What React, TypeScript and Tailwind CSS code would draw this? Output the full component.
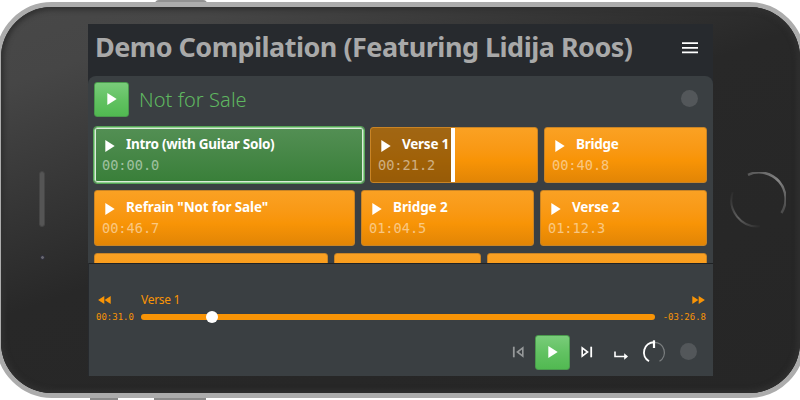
import React from "react";
import { clsx } from "clsx";

type Part = {
  title?: string;
  time?: string;
  width: string;
  tracking?: string;
  active?: boolean;
  progress?: number;
};

const rows: Part[][] = [
  [
    { title: "Intro (with Guitar Solo)", time: "00:00.0", width: "w-[270px]", tracking: "tracking-[-0.27px]", active: true },
    { title: "Verse 1", time: "00:21.2", width: "w-[168px]", tracking: "tracking-[-0.25px]", progress: 80 },
    { title: "Bridge", time: "00:40.8", width: "w-[163px]", tracking: "tracking-[-0.25px]" },
  ],
  [
    { title: 'Refrain "Not for Sale"', time: "00:46.7", width: "w-[261px]", tracking: "tracking-[-0.12px]" },
    { title: "Bridge 2", time: "01:04.5", width: "w-[173px]", tracking: "tracking-[-0.1px]" },
    { title: "Verse 2", time: "01:12.3", width: "w-[167px]", tracking: "tracking-[-0.15px]" },
  ],
  [{ width: "w-[234px]" }, { width: "w-[147px]" }, { width: "w-[220px]" }],
];

function PlayIcon({ className }: { className?: string }) {
  return (
    <svg viewBox="0 0 10 12" className={clsx("h-3 w-2.5 shrink-0 fill-white", className)}>
      <path d="M0.3 0L9.7 6L0.3 12Z" />
    </svg>
  );
}

function PlayButton() {
  return (
    <button className="flex size-[35px] shrink-0 items-center justify-center rounded-[3px] border border-[#4a9a4d] bg-linear-to-b from-[#79cc7a] via-[#62c262] to-[#51b951]">
      <PlayIcon className="mr-px mb-px ml-0.5" />
    </button>
  );
}

function PartTile({ part }: { part: Part }) {
  return (
    <button
      className={clsx(
        "relative flex h-14 shrink-0 flex-col overflow-hidden rounded-[3px] border pl-[7px] text-left",
        part.width,
        part.active
          ? "border-[#8fcf8f] bg-linear-to-b from-[#538f54] to-[#397f39] inset-shadow-[0_0_0_1px_#dcebdb] outline-1 outline-[#56a557]"
          : "border-[#c98425] bg-linear-to-b from-[#faa123] via-[#f89406] via-60% to-[#e28505]",
      )}
    >
      {part.progress && (
        <span
          className="absolute inset-y-0 left-0 bg-[#653f09]/60"
          style={{ width: part.progress }}
        />
      )}
      {part.progress && (
        <span className="absolute inset-y-0 w-1 bg-white" style={{ left: part.progress }} />
      )}
      {part.title && (
        <span className="relative mt-1.5 flex h-5 items-center pl-[3px]">
          <PlayIcon className="mt-[3px]" />
          <span className={clsx("ml-[11px] text-[13.5px] leading-5 font-bold whitespace-nowrap text-white", part.tracking)}>
            {part.title}
          </span>
        </span>
      )}
      {part.time && (
        <span className="relative mt-px h-5 font-['DejaVu_Sans_Mono',monospace] text-[13.6px] leading-5 text-white/50">
          {part.time}
        </span>
      )}
    </button>
  );
}

function SkipIcon({ flip, className }: { flip?: boolean; className?: string }) {
  return (
    <svg viewBox="0 0 12 12" className={clsx("size-3 shrink-0", flip && "-scale-x-100", className)}>
      <path d="M1.2 1.8V10.2L6.6 6Z" fill="none" stroke="currentColor" strokeWidth="1.6" />
      <path d="M10.2 0.7V11.3" stroke="currentColor" strokeWidth="1.8" />
    </svg>
  );
}

function DoubleArrow({ flip }: { flip?: boolean }) {
  return (
    <svg viewBox="0 0 13 8" className={clsx("h-2 w-[13px] fill-[#f89406]", flip && "-scale-x-100")}>
      <path d="M0.3 0L6.4 4L0.3 8ZM6.7 0L12.9 4L6.7 8Z" />
    </svg>
  );
}

function Player() {
  return (
    <footer className="ml-px flex h-[113px] w-[624px] flex-col border-t border-[#1f2224] bg-[#3a3f42]">
      <div className="mt-[30px] flex h-3 items-center pr-2 pl-[9px] text-[#f89406]">
        <DoubleArrow flip />
        <span className="ml-[30px] text-[12px] leading-3 tracking-[-0.3px]">Verse 1</span>
        <span className="ml-auto">
          <DoubleArrow />
        </span>
      </div>
      <div className="mt-[5px] flex h-3 items-center pr-[7px] pl-[7px] font-['DejaVu_Sans_Mono',monospace] text-[9px] leading-3 text-[#f89406]">
        <span className="w-[45px]">00:31.0</span>
        <div className="relative h-1.5 w-[514px] rounded-full bg-[#f89406]">
          <span className="absolute -top-[3px] left-[65px] size-3 rounded-full bg-white" />
        </div>
        <span className="ml-auto">-03:26.8</span>
      </div>
      <div className="mt-[12px] flex h-[35px] items-center pb-px pl-[423px]">
        <SkipIcon flip className="text-[#96999a]" />
        <div className="ml-[11px]">
          <PlayButton />
        </div>
        <SkipIcon className="ml-[11px] text-white" />
        <svg viewBox="0 0 15 9" className="mt-1.5 ml-[21px] h-[9px] w-[15px]" fill="none" stroke="#fff">
          <path d="M1 0.5V5.5H12.5" strokeWidth="1.6" />
          <path d="M10.2 2.3L14 5.5L10.2 8.7Z" fill="#fff" stroke="none" />
        </svg>
        <svg viewBox="0 0 24 24" className="ml-[13px] size-6" fill="none">
          <path d="M12.2 2.3A10.2 10.2 0 0 1 17.5 21.2" stroke="#7b7f81" strokeWidth="1.3" />
          <path d="M12.2 2.3A10.2 10.2 0 0 0 7 21.3" stroke="#fff" strokeWidth="1.9" />
          <path d="M12 0.3V8" stroke="#fff" strokeWidth="2.2" />
        </svg>
        <span className="mb-0.5 ml-[14px] size-[17px] rounded-full bg-[#53575a]" />
      </div>
    </footer>
  );
}

function Screen() {
  return (
    <div className="flex h-[352px] w-[625px] shrink-0 flex-col overflow-hidden bg-[#272a2e]">
      <header className="flex h-[52px] shrink-0 items-center justify-between pr-[15px] pl-[7px]">
        <h1 className="pb-1.5 text-[27px] font-bold whitespace-nowrap tracking-[-0.52px] text-[#a9a9a9]">
          Demo Compilation (Featuring Lidija Roos)
        </h1>
        <svg viewBox="0 0 16 12" className="mb-1 h-3 w-4" stroke="#fff" strokeWidth="1.8">
          <path d="M0 1.2H16M0 5.8H16M0 10.4H16" />
        </svg>
      </header>
      <main className="h-[187px] shrink-0 overflow-hidden rounded-t-lg bg-[#3a3f42] px-1.5 pt-1.5">
        <div className="flex h-[35px] items-center">
          <PlayButton />
          <h2 className="ml-[10px] text-[20px] font-light tracking-[0.08px] text-[#5fb760]">Not for Sale</h2>
          <span className="mr-[9px] mb-0.5 ml-auto size-[17px] rounded-full bg-[#53575a]" />
        </div>
        <div className="mt-[10px] flex flex-col gap-[7px]">
          {rows.map((parts, i) => (
            <div key={i} className="flex gap-[6px]">
              {parts.map((part, j) => (
                <PartTile key={j} part={part} />
              ))}
            </div>
          ))}
        </div>
      </main>
      <Player />
    </div>
  );
}

function Speaker() {
  return (
    <div className="mr-[43px] ml-auto flex w-[6px] flex-col items-center">
      <span className="h-14 w-1.5 shrink-0 rounded-full border border-[#464646] bg-[#555]" />
      <span className="mt-7 size-[5px] rounded-full border border-[#2b2b38] bg-[#66666e]" />
    </div>
  );
}

function HomeButton() {
  return (
    <svg viewBox="0 0 56 56" className="ml-[17px] size-14 shrink-0" fill="none">
      <defs>
        <linearGradient id="ring-top" x1="0" y1="0" x2="1" y2="1">
          <stop offset="0" stopColor="#555" />
          <stop offset="0.5" stopColor="#858585" />
          <stop offset="1" stopColor="#444" />
        </linearGradient>
        <linearGradient id="ring-bottom" x1="0" y1="0" x2="1" y2="1">
          <stop offset="0" stopColor="#2a2a2a" />
          <stop offset="0.5" stopColor="#606060" />
          <stop offset="1" stopColor="#2a2a2a" />
        </linearGradient>
      </defs>
      <path d="M18 2.8A26.5 26.5 0 0 1 51.5 41" stroke="url(#ring-top)" strokeWidth="2.4" />
      <path d="M2.6 20A26.5 26.5 0 0 0 30 54.5" stroke="url(#ring-bottom)" strokeWidth="2" />
    </svg>
  );
}

export default function App() {
  return (
    <div className="relative h-[400px] w-[800px] overflow-hidden bg-white font-['Noto_Sans',sans-serif]">
      <span className="absolute top-0 left-[155px] h-3 w-[52px] rounded-t-sm bg-[#929292]" />
      <span className="absolute bottom-0 left-[90px] h-3 w-7 bg-[#8b8b8b]" />
      <span className="absolute bottom-0 left-[154px] h-3 w-[52px] bg-[#8b8b8b]" />
      <div className="relative top-0.5 -left-1 h-[396px] w-[809px] rounded-[56px] border-[5px] border-[#acacac] bg-[#1f1f1f]">
        <div className="flex h-full w-full items-center rounded-[51px] bg-[linear-gradient(160deg,#484848_0%,#464646_12%,#282828_46%,#262626_100%)] inset-shadow-[0_0_5px_3px_#303030]">
          <div className="flex w-[87px] shrink-0 pt-[30px]">
            <Speaker />
          </div>
          <Screen />
          <HomeButton />
        </div>
      </div>
    </div>
  );
}
